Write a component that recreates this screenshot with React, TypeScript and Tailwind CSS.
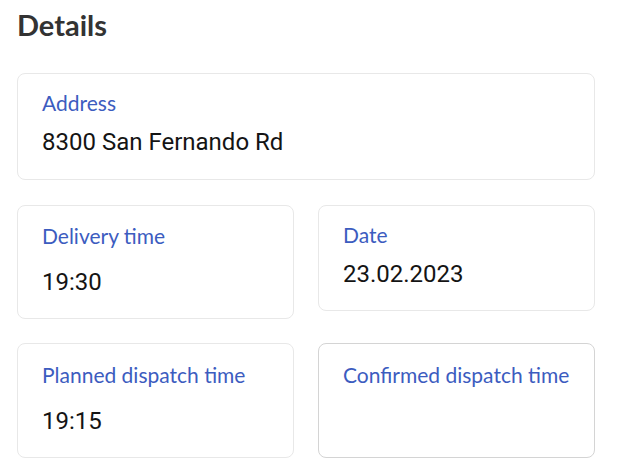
import React from "react";

const label = "block text-[21px] leading-[24px] text-[#3c5cbf]";
const value = "text-[24px] leading-[32px] text-[#141414]";
const valueFont = { fontFamily: 'Roboto, sans-serif' };

export default function App() {
  return (
    <div className="min-h-[470px] w-[627px] bg-white" style={{ fontFamily: 'Lato, sans-serif' }}>
      <div className="pl-[17px] pt-[7px]">
        <h1 className="text-[29px] leading-[36px] font-bold text-[#333333]">Details</h1>
        <div className="mt-[30px] grid w-[578px] grid-cols-2 gap-x-6 gap-y-6">
          <div className="col-span-2 mb-px rounded-lg border border-[#e8e8e8] px-6 pt-[17px] pb-[21px]">
            <span className={label}>Address</span>
            <div className={`mt-[11px] ${value}`} style={valueFont}>
              8300 San Fernando Rd
            </div>
          </div>
          <div className="rounded-lg border border-[#e8e8e8] px-6 pt-[18px] pb-[20px]">
            <span className={label}>Delivery time</span>
            <div className={`mt-[18px] ${value}`} style={valueFont}>
              19:30
            </div>
          </div>
          <div className="self-start rounded-lg border border-[#e8e8e8] px-6 pt-[17px] pb-[20px]">
            <span className={label}>Date</span>
            <div className={`mt-[11px] ${value}`} style={valueFont}>
              23.02.2023
            </div>
          </div>
          <div className="rounded-lg border border-[#e8e8e8] px-6 pt-[19px] pb-[20px]">
            <span className={label}>Planned dispatch time</span>
            <div className={`mt-[18px] ${value}`} style={valueFont}>
              19:15
            </div>
          </div>
          <div className="rounded-lg border border-[#d4d4d4] px-6 pt-[19px] pb-[20px]">
            <span className={label}>Confirmed dispatch time</span>
          </div>
        </div>
      </div>
    </div>
  );
}
